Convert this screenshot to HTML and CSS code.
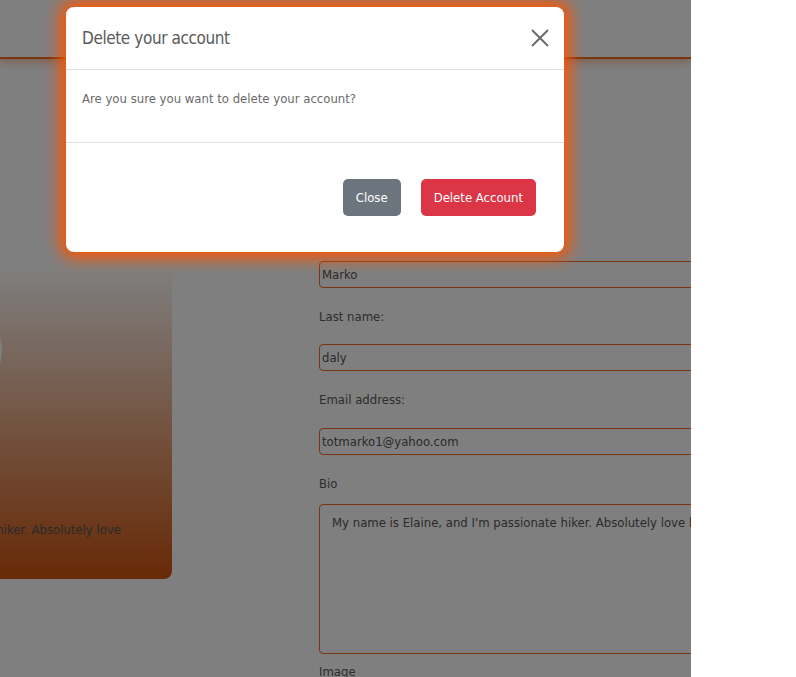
FILE: index.html
```html
<!DOCTYPE html>
<html lang="en">
<head>
<meta charset="utf-8">
<title>Profile</title>
<link rel="stylesheet" href="styles.css">
</head>
<body>
<div class="page">
  <header class="topbar"></header>
  <main class="content">
    <aside class="card">
      <div class="avatar"></div>
      <p class="card-text">hiker. Absolutely love</p>
    </aside>
    <form class="form">
      <label class="label">First name:</label>
      <div class="input">Marko</div>
      <label class="label">Last name:</label>
      <div class="input">daly</div>
      <label class="label label-email">Email address:</label>
      <div class="input">totmarko1@yahoo.com</div>
      <label class="label label-bio">Bio</label>
      <div class="textarea">My name is Elaine, and I'm passionate hiker. Absolutely love b</div>
      <label class="label label-image">Image</label>
    </form>
  </main>
  <div class="backdrop"></div>
  <div class="modal">
    <div class="modal-header">
      <h5 class="modal-title">Delete your account</h5>
      <svg class="close" width="18" height="18" viewBox="0 0 18 18"><path d="M1 1 L17 17 M17 1 L1 17" stroke="#6b6b6b" stroke-width="2" fill="none"/></svg>
    </div>
    <div class="modal-body">Are you sure you want to delete your account?</div>
    <div class="modal-footer">
      <button type="button" class="btn btn-gray">Close</button>
      <button type="button" class="btn btn-red">Delete Account</button>
    </div>
  </div>
</div>
</body>
</html>
```
FILE: styles.css
```css
html, body {
  margin: 0;
  padding: 0;
  background: #ffffff;
  overflow: hidden;
}
body {
  font-family: "DejaVu Sans Condensed", "DejaVu Sans", sans-serif;
}
.page {
  position: relative;
  width: 691px;
  height: 677px;
  background: #ffffff;
  overflow: hidden;
}
.topbar {
  height: 57px;
  border-bottom: 2px solid #f26a1e;
  box-shadow: 0 3px 8px rgba(242, 106, 30, 0.45);
  background: #fff;
}
.content {
  display: flex;
  gap: 147px;
  padding-top: 30px;
}
.card {
  flex: none;
  width: 352px;
  margin-left: -180px;
  height: 490px;
  border-radius: 0 0 8px 8px;
  background: linear-gradient(to bottom, #ffffff 0%, #ffffff 36%, #d0540e 100%);
  position: relative;
  display: flex;
  flex-direction: column;
  justify-content: flex-end;
}
.avatar {
  position: absolute;
  left: 90px;
  top: 215px;
  width: 92px;
  height: 92px;
  border-radius: 50%;
  background: #ffffff;
}
.card-text {
  margin: 0 0 42px 0;
  padding: 0 51px 0 0;
  text-align: right;
  font-size: 13px;
  color: #555;
  white-space: nowrap;
}
.form {
  flex: none;
  width: 420px;
  padding-top: 135px;
  display: flex;
  flex-direction: column;
}
.label {
  font-size: 13px;
  color: #5a5a5a;
  line-height: 20px;
  margin: 19px 0 17px;
}
.form .label:first-child { margin-top: 0; }
.label-email { margin-bottom: 18px; }
.label-bio { margin-bottom: 10px; }
.label-image { margin-top: 8px; }
.input {
  height: 25px;
  border: 1px solid #f26a1e;
  border-radius: 4px;
  font-size: 13px;
  line-height: 25px;
  padding: 0 2px;
  color: #555;
  white-space: nowrap;
}
.textarea {
  height: 150px;
  box-sizing: border-box;
  border: 1px solid #f26a1e;
  border-radius: 4px;
  font-size: 13px;
  color: #555;
  padding: 10px 12px;
  white-space: nowrap;
  overflow: hidden;
}
.backdrop {
  position: absolute;
  inset: 0;
  background: rgba(0, 0, 0, 0.5);
}
.modal {
  position: absolute;
  left: 66px;
  top: 7px;
  width: 498px;
  height: 245px;
  background: #fff;
  border-radius: 8px;
  box-shadow: 0 0 16px 6px #ff5500;
  display: flex;
  flex-direction: column;
}
.modal-header {
  height: 62px;
  border-bottom: 1px solid #dee2e6;
  display: flex;
  align-items: center;
  justify-content: space-between;
  padding: 0 16px;
}
.modal-title {
  margin: 0;
  font-size: 17px;
  letter-spacing: -0.4px;
  font-weight: normal;
  color: #5a5a5a;
}
.close {
  margin-right: -1px;
}
.modal-body {
  height: 73px;
  border-bottom: 1px solid #dee2e6;
  padding: 21px 16px 0;
  box-sizing: border-box;
  font-size: 13px;
  color: #6a6a6a;
}
.modal-footer {
  flex: 1;
  display: flex;
  justify-content: flex-end;
  align-items: flex-start;
  gap: 20px;
  padding: 36px 28px 0;
}
.btn {
  height: 37px;
  border: none;
  border-radius: 5px;
  color: #fff;
  font-family: inherit;
  font-size: 13px;
  padding: 0 13px;
}
.btn-gray { background: #6c757d; }
.btn-red { background: #dc3545; }
```
